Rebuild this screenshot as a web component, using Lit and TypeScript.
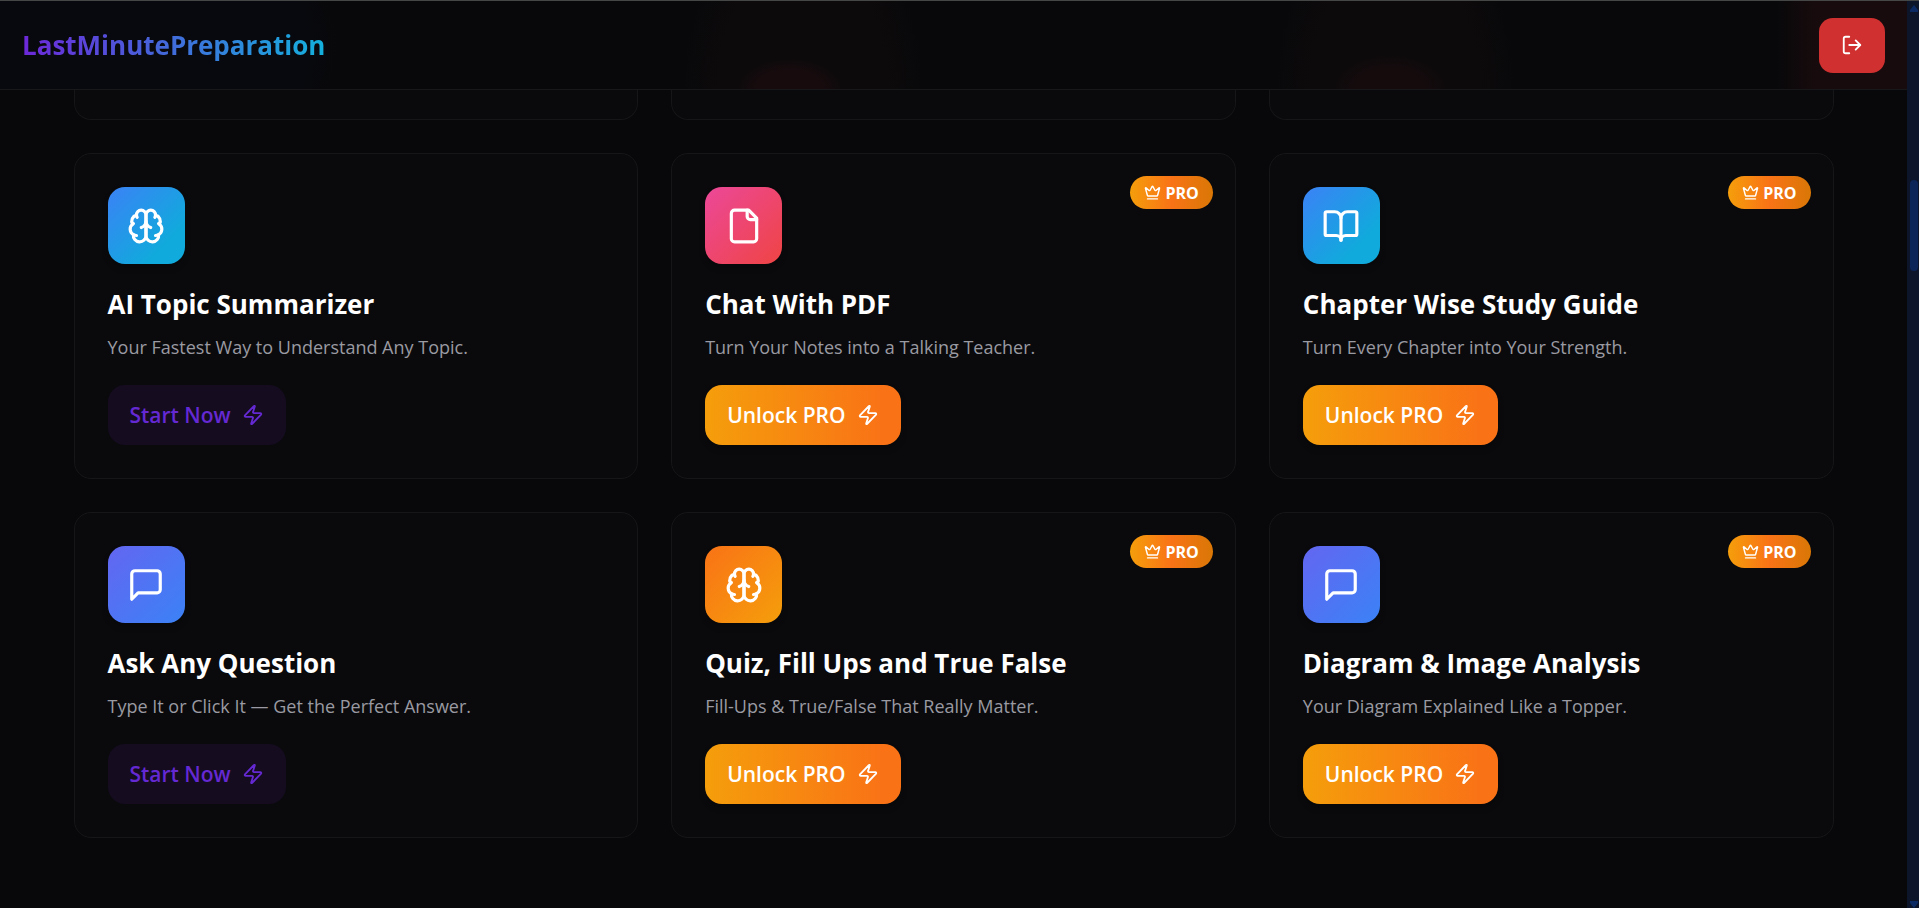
import { LitElement, html, css, svg } from "lit";
import { customElement } from "lit/decorators.js";
import { classMap } from "lit/directives/class-map.js";

const icons = {
  brain: svg`<path d="M12 5a3 3 0 1 0-5.997.125 4 4 0 0 0-2.526 5.77 4 4 0 0 0 .556 6.588A4 4 0 1 0 12 18Z"/><path d="M12 5a3 3 0 1 1 5.997.125 4 4 0 0 1 2.526 5.77 4 4 0 0 1-.556 6.588A4 4 0 1 1 12 18Z"/><path d="M15 13a4.5 4.5 0 0 1-3-4 4.5 4.5 0 0 1-3 4"/><path d="M17.599 6.5a3 3 0 0 0 .399-1.375"/><path d="M6.003 5.125A3 3 0 0 0 6.401 6.5"/><path d="M3.477 10.896a4 4 0 0 1 .585-.396"/><path d="M19.938 10.5a4 4 0 0 1 .585.396"/><path d="M6 18a4 4 0 0 1-1.967-.516"/><path d="M19.967 17.484A4 4 0 0 1 18 18"/>`,
  file: svg`<path d="M15 2H6a2 2 0 0 0-2 2v16a2 2 0 0 0 2 2h12a2 2 0 0 0 2-2V7Z"/><path d="M14 2v4a2 2 0 0 0 2 2h4"/>`,
  book: svg`<path d="M12 7v14"/><path d="M3 18a1 1 0 0 1-1-1V4a1 1 0 0 1 1-1h5a4 4 0 0 1 4 4 4 4 0 0 1 4-4h5a1 1 0 0 1 1 1v13a1 1 0 0 1-1 1h-6a3 3 0 0 0-3 3 3 3 0 0 0-3-3z"/>`,
  message: svg`<path d="M21 15a2 2 0 0 1-2 2H7l-4 4V5a2 2 0 0 1 2-2h14a2 2 0 0 1 2 2z"/>`,
  zap: svg`<path d="M4 14a1 1 0 0 1-.78-1.63l9.9-10.2a.5.5 0 0 1 .86.46l-1.92 6.02A1 1 0 0 0 13 10h7a1 1 0 0 1 .78 1.63l-9.9 10.2a.5.5 0 0 1-.86-.46l1.92-6.02A1 1 0 0 0 11 14z"/>`,
  crown: svg`<path d="M11.562 3.266a.5.5 0 0 1 .876 0L15.39 8.87a1 1 0 0 0 1.516.294L21.183 5.5a.5.5 0 0 1 .798.519l-2.834 10.246a1 1 0 0 1-.956.734H5.81a1 1 0 0 1-.957-.734L2.02 6.02a.5.5 0 0 1 .798-.519l4.276 3.664a1 1 0 0 0 1.516-.294z"/><path d="M5 21h14"/>`,
  logout: svg`<path d="M9 21H5a2 2 0 0 1-2-2V5a2 2 0 0 1 2-2h4"/><path d="m16 17 5-5-5-5"/><path d="M21 12H9"/>`,
};
type IconName = keyof typeof icons;

const icon = (name: IconName) => html`<svg
  viewBox="0 0 24 24" fill="none" stroke="currentColor" stroke-width="2"
  stroke-linecap="round" stroke-linejoin="round" aria-hidden="true"
>${icons[name]}</svg>`;

interface Tool {
  icon: IconName;
  tone: "sky" | "rose" | "indigo" | "orange";
  title: string;
  text: string;
  pro: boolean;
}

const tools: Tool[] = [
  { icon: "brain", tone: "sky", title: "AI Topic Summarizer", text: "Your Fastest Way to Understand Any Topic.", pro: false },
  { icon: "file", tone: "rose", title: "Chat With PDF", text: "Turn Your Notes into a Talking Teacher.", pro: true },
  { icon: "book", tone: "sky", title: "Chapter Wise Study Guide", text: "Turn Every Chapter into Your Strength.", pro: true },
  { icon: "message", tone: "indigo", title: "Ask Any Question", text: "Type It or Click It — Get the Perfect Answer.", pro: false },
  { icon: "brain", tone: "orange", title: "Quiz, Fill Ups and True False", text: "Fill-Ups & True/False That Really Matter.", pro: true },
  { icon: "message", tone: "indigo", title: "Diagram & Image Analysis", text: "Your Diagram Explained Like a Topper.", pro: true },
];

@customElement("app-root")
export class AppRoot extends LitElement {
  static styles = css`
    :host {
      display: flex;
      min-height: 100vh;
      background: #08080a;
      color: #fff;
      font-family: "Segoe UI", "Open Sans", "Noto Sans", sans-serif;
    }
    * { box-sizing: border-box; }
    svg { display: block; flex: none; }
    .page { flex: 1; min-width: 0; }

    .header {
      display: flex;
      align-items: center;
      justify-content: space-between;
      height: 90px;
      padding: 0 22px;
      border-top: 1px solid #444746;
      border-bottom: 1px solid #18181a;
      background:
        radial-gradient(ellipse 52px 30px at 790px 100%, #180b0e 60%, transparent),
        radial-gradient(ellipse 120px 180px at 803px 100%, #0d0a0b 70%, transparent),
        radial-gradient(ellipse 56px 34px at 1390px 100%, #150b0d 60%, transparent),
        radial-gradient(ellipse 120px 180px at 1395px 100%, #0d0a0b 70%, transparent),
        linear-gradient(to left, #180b0d 90px, transparent 130px),
        radial-gradient(ellipse 340px 200px at 0 50%, #08090e 90%, transparent),
        #08080a;
    }
    .logo {
      font-size: 26px;
      line-height: 36px;
      font-weight: 700;
      text-decoration: none;
      color: transparent;
      background: linear-gradient(to right, #6d28d9, #14b1dd);
      background-clip: text;
      -webkit-background-clip: text;
    }
    button { border: 0; font-family: inherit; cursor: pointer; }
    .logout {
      display: grid;
      place-items: center;
      width: 66px;
      height: 55px;
      border-radius: 14px;
      background: #d03030;
      color: #fff;
    }
    .logout svg { width: 22px; height: 22px; }

    .content { max-width: 1760px; margin: 0 auto; padding-bottom: 70px; }
    .grid {
      display: grid;
      grid-template-columns: repeat(3, minmax(0, 1fr));
      gap: 33px;
    }
    .card {
      position: relative;
      display: flex;
      flex-direction: column;
      align-items: flex-start;
      padding: 33px;
      border: 1px solid #161618;
      border-radius: 17px;
      background: #0a0a0c;
    }
    .card.tail {
      height: 30px;
      padding: 0;
      border-top: 0;
      border-radius: 0 0 17px 17px;
    }
    .tile {
      display: grid;
      place-items: center;
      width: 77px;
      height: 77px;
      border-radius: 17px;
      box-shadow: 0 4px 6px #0003;
    }
    .tile svg { width: 38px; height: 38px; }
    .sky { background: linear-gradient(135deg, #3b82f6, #10aadc 75%); }
    .rose { background: linear-gradient(135deg, #ec4899, #ef4444); }
    .indigo { background: linear-gradient(135deg, #6366f1, #3b82f6); }
    .orange { background: linear-gradient(135deg, #f97316, #f59e0b); }

    h3 {
      margin: 21px 0 0;
      font-size: 26px;
      line-height: 38px;
      font-weight: 700;
    }
    p {
      margin: 9px 0 23px;
      font-size: 18px;
      line-height: 30px;
      color: #9a9aa2;
    }
    .action {
      display: flex;
      align-items: center;
      gap: 11px;
      height: 60px;
      padding: 0 22px;
      border-radius: 17px;
      font-size: 21px;
      line-height: 30px;
      font-weight: 600;
      background: #150c20;
      color: #6529d3;
    }
    .action.pro {
      background: linear-gradient(to right, #f59e0b, #f97316 90%);
      color: #fff;
      box-shadow: 0 4px 6px #0003;
    }
    .action svg { width: 22px; height: 22px; }
    .badge {
      position: absolute;
      top: 22px;
      right: 22px;
      display: flex;
      align-items: center;
      gap: 4px;
      height: 33px;
      padding: 0 14px;
      border-radius: 17px;
      font-size: 16px;
      line-height: 24px;
      font-weight: 700;
      background: linear-gradient(to right, #f59e0b, #f97316 50%, #d97706);
    }
    .badge svg { width: 17px; height: 17px; }

    .scrollbar {
      flex: none;
      display: flex;
      flex-direction: column;
      align-items: center;
      width: 12px;
      height: 100vh;
      padding: 4px 1px 0 3px;
      border-top: 1px solid #444746;
      background: #0c152a;
      color: #0b2a63;
    }
    .scrollbar svg { width: 8px; height: 7px; }
    .thumb { width: 8px; height: 91px; margin-top: 168px; border-radius: 4px; background: #0b2558; }
    .end { margin-top: auto; }
  `;

  private card(t: Tool) {
    return html`<article class="card">
      ${t.pro ? html`<span class="badge">${icon("crown")}PRO</span>` : null}
      <div class="tile ${t.tone}">${icon(t.icon)}</div>
      <h3>${t.title}</h3>
      <p>${t.text}</p>
      <button class=${classMap({ action: true, pro: t.pro })}>
        ${t.pro ? "Unlock PRO" : "Start Now"}${icon("zap")}
      </button>
    </article>`;
  }

  render() {
    return html`
      <div class="page">
        <header class="header">
          <a class="logo" href="#">LastMinutePreparation</a>
          <button class="logout" aria-label="Log out">${icon("logout")}</button>
        </header>
        <main class="content">
          <div class="grid">
            ${[0, 1, 2].map(() => html`<div class="card tail"></div>`)}
            ${tools.map((t) => this.card(t))}
          </div>
        </main>
      </div>
      <div class="scrollbar" aria-hidden="true">
        <svg viewBox="0 0 8 7"><path fill="currentColor" d="M4 0 8 5v2H0V5z"/></svg>
        <div class="thumb"></div>
        <svg class="end" viewBox="0 0 8 7"><path fill="currentColor" d="M4 7 8 2V0H0v2z"/></svg>
      </div>
    `;
  }
}
